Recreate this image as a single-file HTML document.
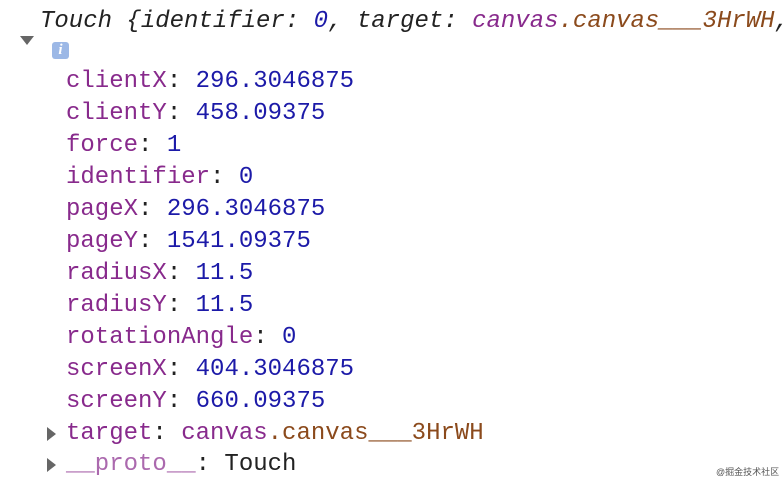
<!DOCTYPE html>
<html><head><style>
body{margin:0;width:784px;height:486px;background:#fff;overflow:hidden;font-family:"Liberation Mono",monospace;font-size:24px;color:#222;position:relative}
.l{position:absolute;left:66px;white-space:pre;line-height:32px}
.k{color:#882a8c}.n{color:#1c1aa8}.s{color:#8b4a1c}
.tri{position:absolute;width:0;height:0}
</style></head><body>
<div class="l" style="left:40px;top:6px;font-style:italic">Touch {identifier: <span class="n">0</span>, target: <span class="k">canvas</span><span class="s">.canvas___3HrWH</span>,</div>
<div class="tri" style="left:20px;top:36px;border-left:7px solid transparent;border-right:7px solid transparent;border-top:9px solid #666"></div>
<div style="position:absolute;left:52px;top:42px;width:17px;height:17px;background:#9cb8e6;border-radius:3px;color:#fff;font:bold italic 15px 'Liberation Serif',serif;text-align:center;line-height:17px">i</div>
<div class="l" style="top:66px"><span class="k">clientX</span>: <span class="n">296.3046875</span></div>
<div class="l" style="top:98px"><span class="k">clientY</span>: <span class="n">458.09375</span></div>
<div class="l" style="top:130px"><span class="k">force</span>: <span class="n">1</span></div>
<div class="l" style="top:162px"><span class="k">identifier</span>: <span class="n">0</span></div>
<div class="l" style="top:194px"><span class="k">pageX</span>: <span class="n">296.3046875</span></div>
<div class="l" style="top:226px"><span class="k">pageY</span>: <span class="n">1541.09375</span></div>
<div class="l" style="top:258px"><span class="k">radiusX</span>: <span class="n">11.5</span></div>
<div class="l" style="top:290px"><span class="k">radiusY</span>: <span class="n">11.5</span></div>
<div class="l" style="top:322px"><span class="k">rotationAngle</span>: <span class="n">0</span></div>
<div class="l" style="top:354px"><span class="k">screenX</span>: <span class="n">404.3046875</span></div>
<div class="l" style="top:386px"><span class="k">screenY</span>: <span class="n">660.09375</span></div>
<div class="tri" style="left:47px;top:427px;border-top:7px solid transparent;border-bottom:7px solid transparent;border-left:9px solid #666"></div>
<div class="l" style="top:418px"><span class="k">target</span>: <span class="k">canvas</span><span class="s">.canvas___3HrWH</span></div>
<div class="tri" style="left:47px;top:458px;border-top:7px solid transparent;border-bottom:7px solid transparent;border-left:9px solid #666"></div>
<div class="l" style="top:449px"><span class="k" style="opacity:.7">__proto__</span>: Touch</div>
<div style="position:absolute;left:716px;top:465px;font:9px 'Liberation Sans','Noto Sans CJK SC',sans-serif;color:#555;white-space:nowrap">@掘金技术社区</div>
</body></html>
